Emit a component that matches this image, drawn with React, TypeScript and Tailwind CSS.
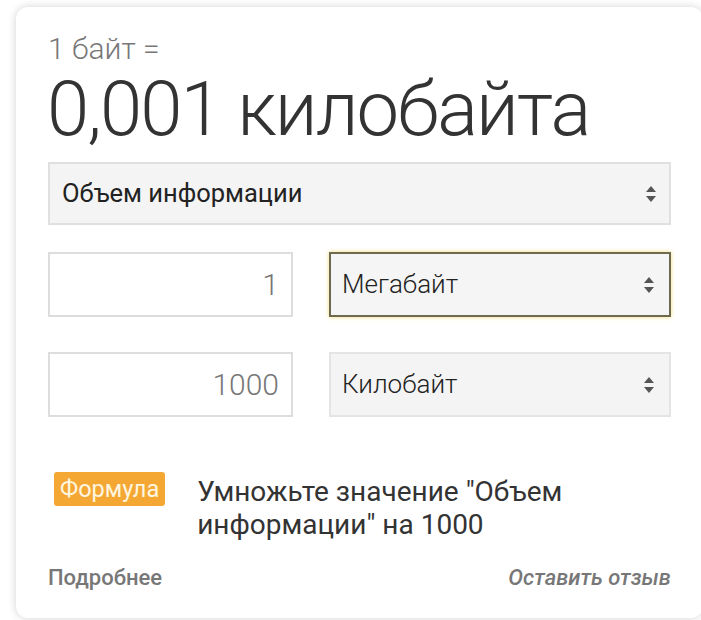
const Arrows = () => (
  <svg width="12" height="18" viewBox="0 0 12 18" className="shrink-0">
    <path d="M6 1 L11 7 H1 Z" fill="#555" />
    <path d="M6 17 L11 11 H1 Z" fill="#555" />
  </svg>
);

const App = () => {
  return (
    <div className="w-[701px] h-[620px] overflow-hidden bg-white font-['Roboto',sans-serif]">
      <div className="ml-4 mt-[7px] w-[687px] h-[611px] rounded-[12px] bg-white shadow-[0_0_8px_rgba(0,0,0,0.18)] pl-8 pr-8 pt-[25px]">
        <div className="text-[30px] leading-[34px] font-light text-[#777]">1 байт =</div>
        <div className="mt-[3px] text-[76px] leading-[80px] font-light tracking-[-0.025em] text-[#333] -ml-[1px] whitespace-nowrap">
          0,001 килобайта
        </div>

        <div className="mt-[13px] flex h-[63px] items-center justify-between border-2 border-[#e0e0e0] bg-[#f4f4f4] pl-[12px] pr-[12px]">
          <span className="text-[25.5px] text-[#222]">Объем информации</span>
          <Arrows />
        </div>

        <div className="mt-[27px] flex gap-9">
          <div className="flex h-[65px] w-[245px] items-center justify-end border-2 border-[#ddd] bg-white pr-[12px]">
            <span className="text-[30px] font-light text-[#777]">1</span>
          </div>
          <div className="flex h-[65px] flex-1 items-center justify-between border-2 border-[#6e6a4e] bg-[#f4f5f4] pl-[11px] pr-[14px] shadow-[0_0_4px_rgba(240,200,60,0.7)]">
            <span className="text-[26px] font-light text-[#222]">Мегабайт</span>
            <Arrows />
          </div>
        </div>

        <div className="mt-[35px] flex gap-9">
          <div className="flex h-[65px] w-[245px] items-center justify-end border-2 border-[#ddd] bg-white pr-[12px]">
            <span className="text-[30px] font-light text-[#777]">1000</span>
          </div>
          <div className="flex h-[65px] flex-1 items-center justify-between border-2 border-[#e4e4e4] bg-[#f4f4f4] pl-[11px] pr-[14px]">
            <span className="text-[26px] font-light text-[#222]">Килобайт</span>
            <Arrows />
          </div>
        </div>

        <div className="mt-[55px] flex items-start">
          <div className="ml-[6px] rounded-[3px] bg-[#f4a833] px-[6px] text-[23.5px] leading-[34px] text-[#fff6e0]">
            Формула
          </div>
          <div className="ml-[32px] mt-[3px] text-[28px] leading-[33px] text-[#333]">
            Умножьте значение "Объем
            <br />
            информации" на 1000
          </div>
        </div>

        <div className="mt-[24px] flex justify-between text-[22px] leading-[26px] font-medium text-[#777]">
          <span>Подробнее</span>
          <span className="italic">Оставить отзыв</span>
        </div>
      </div>
    </div>
  );
};

export default App;
